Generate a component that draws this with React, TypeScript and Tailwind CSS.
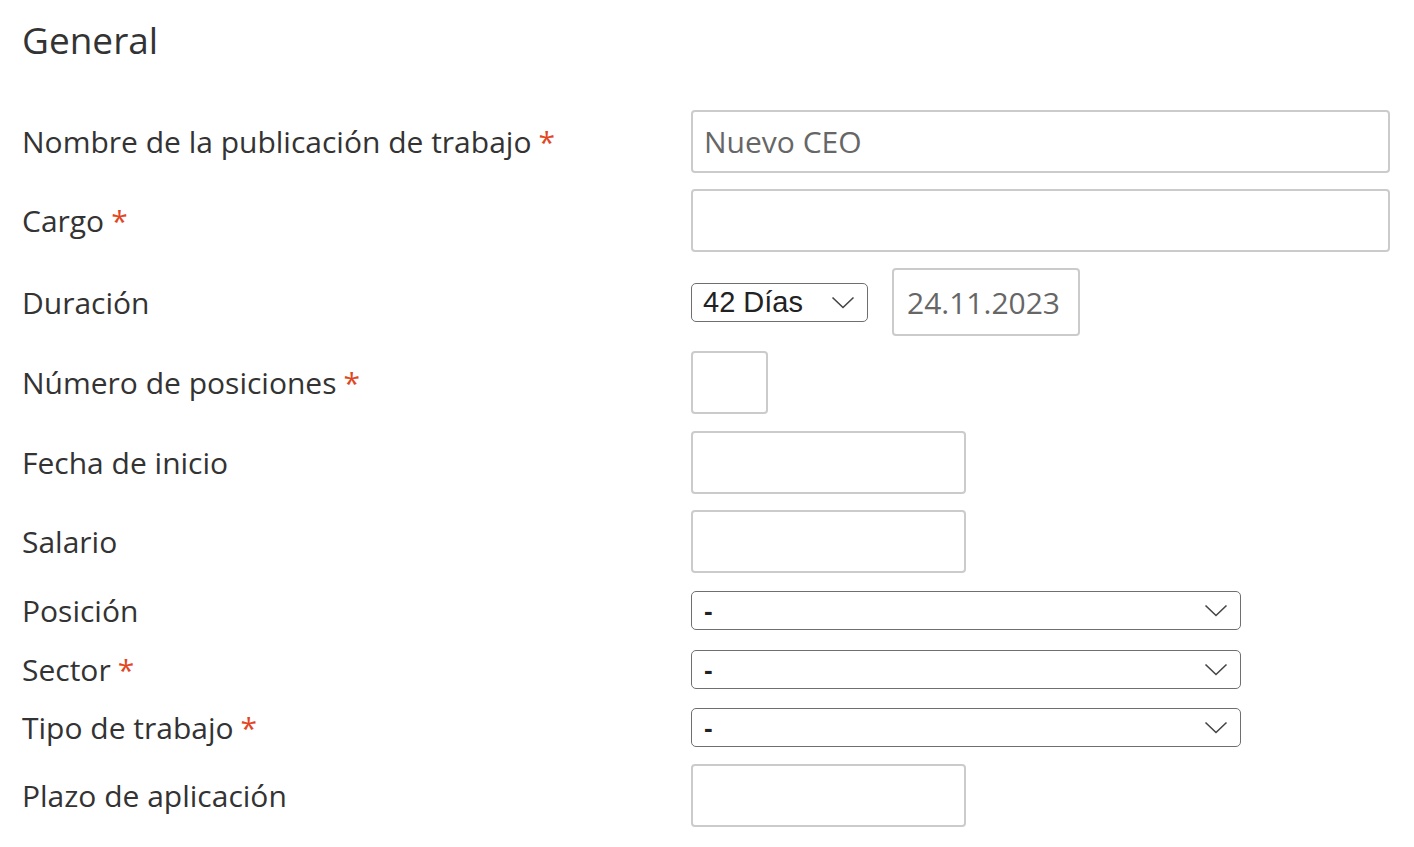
import React from "react"

const font = { fontFamily: "'Open Sans', 'Noto Sans', sans-serif" }

function Req() {
  return <span className="ml-[7px] text-[#e2461f]">*</span>
}

function Chevron() {
  return (
    <svg width="24" height="13" viewBox="0 0 24 13" fill="none" className="shrink-0">
      <path d="M1.5 1.5 L12 11.5 L22.5 1.5" stroke="#444" strokeWidth="1.6" />
    </svg>
  )
}

function FakeSelect({ value, className }: { value: string; className: string }) {
  return (
    <div
      className={`flex h-[39px] items-center justify-between rounded-[5px] border-[1.5px] border-[#6f6f6f] bg-white pr-[12px] text-[#222] ${className}`}
      style={{ fontFamily: "'Liberation Sans', Arial, sans-serif" }}
    >
      <span className="pt-[2px]">{value}</span>
      <Chevron />
    </div>
  )
}

function TextBox({ className, value }: { className: string; value?: string }) {
  return (
    <div
      className={`flex h-[63px] items-center rounded-[4px] border-2 border-[#cbcbcb] bg-white px-[11px] text-[30px] text-[#666] ${className}`}
    >
      {value}
    </div>
  )
}

function Row({ label, req, children, className = "" }: { label: string; req?: boolean; children: React.ReactNode; className?: string }) {
  return (
    <div className={`flex items-center ${className}`}>
      <div className="w-[669px] shrink-0 text-[30px] leading-[41px] text-[#333]">
        {label}
        {req && <Req />}
      </div>
      {children}
    </div>
  )
}

export default function App() {
  return (
    <div className="min-h-[847px] bg-white pl-[22px] pr-[24px] pt-[14px]" style={font}>
      <h1 className="text-[37px] leading-[52px] text-[#333]">General</h1>

      <div className="mt-[44px] flex flex-col">
        <Row label="Nombre de la publicación de trabajo" req className="mb-[16px]">
          <TextBox className="flex-1" value="Nuevo CEO" />
        </Row>
        <Row label="Cargo" req className="mb-[16px]">
          <TextBox className="flex-1" />
        </Row>
        <Row label="Duración" className="mb-[15px]">
          <div className="flex items-center gap-[24px]">
            <FakeSelect value="42 Días" className="w-[177px] pl-[11px] text-[29px]" />
            <div className="flex h-[68px] w-[188px] items-center rounded-[4px] border-2 border-[#cbcbcb] px-[13px] text-[30px] text-[#666]">
              24.11.2023
            </div>
          </div>
        </Row>
        <Row label="Número de posiciones" req className="mb-[17px]">
          <TextBox className="w-[77px]" />
        </Row>
        <Row label="Fecha de inicio" className="mb-[16px]">
          <TextBox className="w-[275px]" />
        </Row>
        <Row label="Salario" className="mb-[17px]">
          <TextBox className="w-[275px]" />
        </Row>
        <Row label="Posición" className="mb-[18px]">
          <FakeSelect value="-" className="w-[550px] pl-[12px] text-[26px] font-bold" />
        </Row>
        <Row label="Sector" req className="mb-[17px]">
          <FakeSelect value="-" className="w-[550px] pl-[12px] text-[26px] font-bold" />
        </Row>
        <Row label="Tipo de trabajo" req className="mb-[16px]">
          <FakeSelect value="-" className="w-[550px] pl-[12px] text-[26px] font-bold" />
        </Row>
        <Row label="Plazo de aplicación">
          <TextBox className="w-[275px]" />
        </Row>
      </div>
    </div>
  )
}
